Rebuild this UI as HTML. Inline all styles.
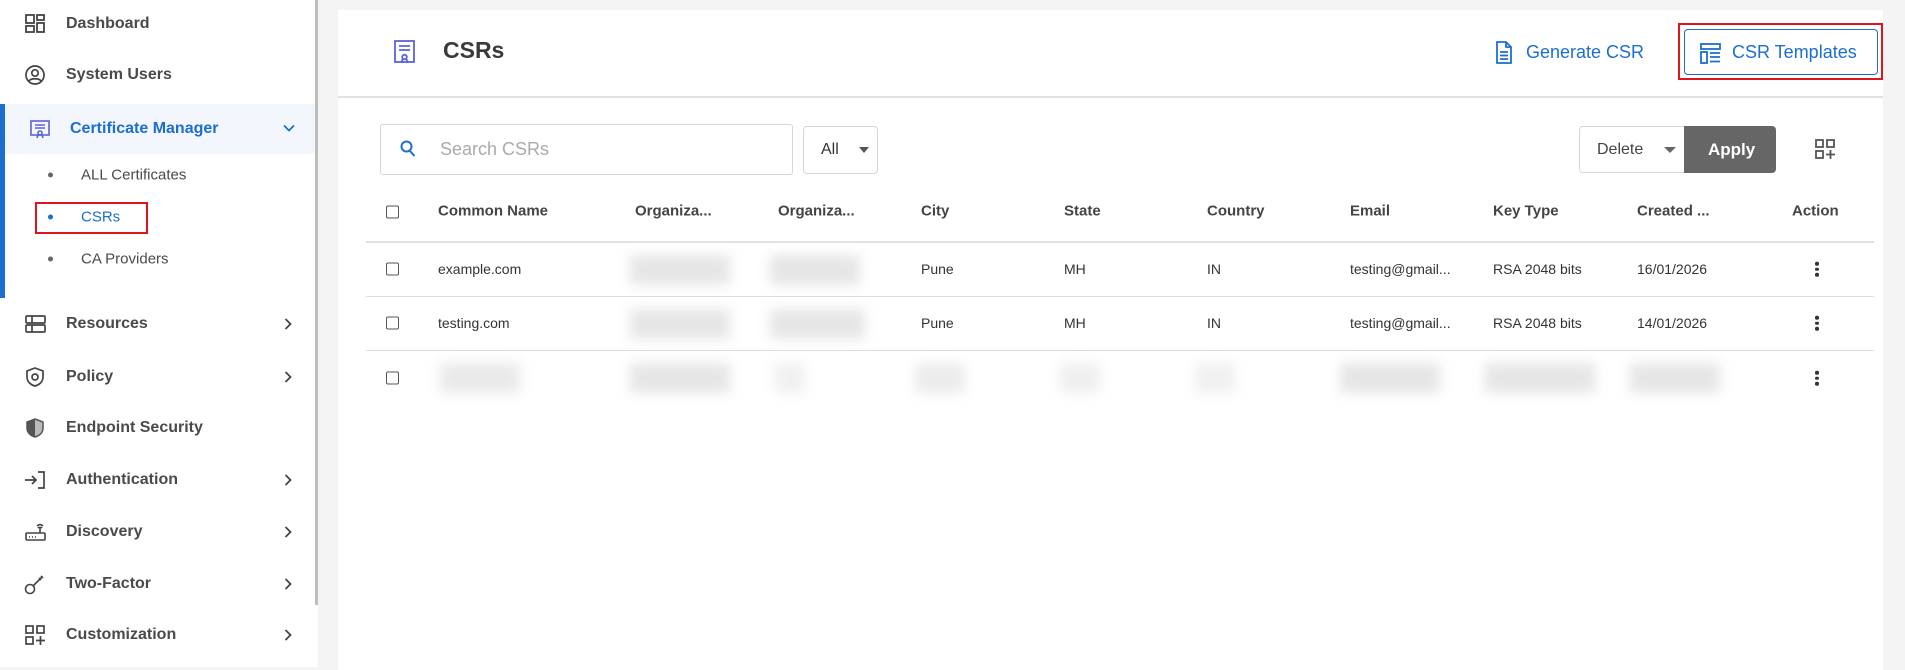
<!DOCTYPE html>
<html><head><meta charset="utf-8">
<style>
*{box-sizing:border-box;margin:0;padding:0}
body{width:1905px;height:667px;overflow:hidden;background:#f4f4f5;font-family:"Liberation Sans",sans-serif;position:relative;color:#444}
.side{position:absolute;left:0;top:0;width:318px;height:667px;background:#fff}
.sb{position:absolute;left:315px;top:0;width:3px;height:605px;background:#bdbdbd}
.it{position:absolute;left:66px;font-size:16px;font-weight:bold;color:#4a4a4a;transform:translateY(-50%)}
.ic{position:absolute;left:24px;width:22px;height:22px;transform:translateY(-50%)}
.ch{position:absolute;left:282px;width:12px;height:12px;transform:translateY(-50%)}
.sub{position:absolute;left:81px;font-size:15px;color:#4a4a4a;transform:translateY(-50%)}
.dot{position:absolute;left:48px;width:5px;height:5px;border-radius:50%;background:#666;transform:translateY(-50%)}
.card{position:absolute;left:338px;top:10px;width:1545px;height:660px;background:#fff}
.abs{position:absolute}
.th{position:absolute;top:211px;font-size:15px;font-weight:bold;color:#444;transform:translateY(-50%)}
.td{position:absolute;font-size:14px;color:#333;transform:translateY(-50%)}
.cb{position:absolute;left:386px;width:13px;height:13px;border:1.5px solid #555;border-radius:2px;transform:translateY(-50%)}
.hl{position:absolute;left:366px;width:1508px;height:1px;background:#ddd}
.bl{position:absolute;height:30px;background:#e6e6e6;filter:blur(6px);transform:translateY(-50%)}
.kd{position:absolute;left:1815px;width:4px;transform:translateY(-50%)}
.kd i{display:block;width:3.5px;height:3.5px;border-radius:50%;background:#333;margin:2px 0}
</style></head><body>
<div class="side">
<div class="sb"></div>
<svg class="ic" style="top:24px" viewBox="0 0 22 22" fill="none" stroke="#444" stroke-width="1.8"><rect x="2" y="2" width="8" height="8"/><rect x="13" y="2" width="7" height="5"/><rect x="2" y="13" width="8" height="6"/><rect x="13" y="10" width="7" height="9"/></svg>
<div class="it" style="top:24px">Dashboard</div>
<svg class="ic" style="top:75px" viewBox="0 0 22 22" fill="none" stroke="#444" stroke-width="1.7"><circle cx="11" cy="11" r="9"/><circle cx="11" cy="9" r="3.2"/><path d="M5 17c2-3 10-3 12 0"/></svg>
<div class="it" style="top:75px">System Users</div>
<div class="abs" style="left:0;top:104px;width:315px;height:50px;background:#f3f6fc"></div>
<div class="abs" style="left:0;top:104px;width:5px;height:194px;background:#1b6fd1"></div>
<svg class="ic" style="top:129px;left:29px" viewBox="0 0 22 22" fill="none" stroke="#5b63d8" stroke-width="1.6"><rect x="2" y="3" width="18" height="14"/><path d="M6 7h10M6 10h10"/><circle cx="11" cy="15" r="2"/><path d="M9 17l-1 3M13 17l1 3"/></svg>
<div class="it" style="top:129px;left:70px;color:#1b6fd1">Certificate Manager</div>
<svg class="ch" style="top:128px;left:283px" viewBox="0 0 12 12" fill="none" stroke="#1b6fd1" stroke-width="1.8"><path d="M1 3.5l5 5 5-5"/></svg>
<div class="dot" style="top:175px"></div><div class="sub" style="top:175px">ALL Certificates</div>
<div class="abs" style="left:35px;top:202px;width:113px;height:32px;border:2px solid #e0141e"></div>
<div class="dot" style="top:217px;background:#1b6fd1"></div><div class="sub" style="top:217px;color:#1b6fd1">CSRs</div>
<div class="dot" style="top:259px"></div><div class="sub" style="top:259px">CA Providers</div>
<svg class="ic" style="top:324px" viewBox="0 0 22 22" fill="none" stroke="#444" stroke-width="1.7"><rect x="2" y="3" width="19" height="7" rx="1"/><rect x="2" y="12" width="19" height="7" rx="1"/><path d="M8 3v7M8 12v7"/></svg>
<div class="it" style="top:324px">Resources</div>
<svg class="ic" style="top:377px" viewBox="0 0 22 22" fill="none" stroke="#444" stroke-width="1.7"><path d="M11 2l8 3v6c0 5-4 8-8 9-4-1-8-4-8-9V5z"/><circle cx="11" cy="11" r="3"/></svg>
<div class="it" style="top:377px">Policy</div>
<svg class="ic" style="top:428px" viewBox="0 0 22 22"><path d="M11 2l8 3v6c0 5-4 8-8 9-4-1-8-4-8-9V5z" fill="#bbb" stroke="#555" stroke-width="1.5"/><path d="M11 2v18c-4-1-8-4-8-9V5z" fill="#555"/></svg>
<div class="it" style="top:428px">Endpoint Security</div>
<svg class="ic" style="top:480px" viewBox="0 0 22 22" fill="none" stroke="#444" stroke-width="1.7"><path d="M1 11h11M8 7l4 4-4 4M14 3h6v16h-6"/></svg>
<div class="it" style="top:480px">Authentication</div>
<svg class="ic" style="top:532px" viewBox="0 0 22 22" fill="none" stroke="#444" stroke-width="1.6"><rect x="2" y="12" width="19" height="7" rx="1"/><path d="M16 12V6M13 5c2-2 4-2 6 0M14 7c1-1 3-1 4 0"/><path d="M5 16h1M8 16h1M11 16h1" stroke-width="1.4"/></svg>
<div class="it" style="top:532px">Discovery</div>
<svg class="ic" style="top:584px" viewBox="0 0 22 22" fill="none" stroke="#444" stroke-width="1.6"><circle cx="6" cy="16" r="4.5"/><path d="M9 13l9-9M15 5l2 2M17 3l2 2"/></svg>
<div class="it" style="top:584px">Two-Factor</div>
<svg class="ic" style="top:635px" viewBox="0 0 22 22" fill="none" stroke="#444" stroke-width="1.7"><rect x="2" y="2" width="7" height="7"/><rect x="13" y="2" width="7" height="7"/><rect x="2" y="13" width="7" height="7"/><path d="M16.5 12v9M12 16.5h9"/></svg>
<div class="it" style="top:635px">Customization</div>
<svg class="ch" style="top:324px" viewBox="0 0 12 12" fill="none" stroke="#444" stroke-width="1.8"><path d="M3.5 1l5 5-5 5"/></svg>
<svg class="ch" style="top:377px" viewBox="0 0 12 12" fill="none" stroke="#444" stroke-width="1.8"><path d="M3.5 1l5 5-5 5"/></svg>
<svg class="ch" style="top:480px" viewBox="0 0 12 12" fill="none" stroke="#444" stroke-width="1.8"><path d="M3.5 1l5 5-5 5"/></svg>
<svg class="ch" style="top:532px" viewBox="0 0 12 12" fill="none" stroke="#444" stroke-width="1.8"><path d="M3.5 1l5 5-5 5"/></svg>
<svg class="ch" style="top:584px" viewBox="0 0 12 12" fill="none" stroke="#444" stroke-width="1.8"><path d="M3.5 1l5 5-5 5"/></svg>
<svg class="ch" style="top:635px" viewBox="0 0 12 12" fill="none" stroke="#444" stroke-width="1.8"><path d="M3.5 1l5 5-5 5"/></svg>
</div>

<div class="card"></div>
<div class="abs" style="left:338px;top:96px;width:1545px;height:2px;background:#e2e2e2"></div>
<svg class="abs" style="left:393px;top:39px" width="24" height="26" viewBox="0 0 24 26" fill="none" stroke="#5b63d8" stroke-width="1.8"><rect x="2" y="2" width="19" height="21"/><path d="M6 7h11M6 11h11"/><circle cx="11.5" cy="18" r="2.3"/><path d="M9.5 20l-1 4M13.5 20l1 4"/></svg>
<div class="abs" style="left:443px;top:37px;font-size:23px;font-weight:bold;color:#3a3a3a">CSRs</div>
<svg class="abs" style="left:1495px;top:40px" width="18" height="25" viewBox="0 0 18 25" fill="none" stroke="#1b6fd1" stroke-width="1.8"><path d="M2 2h9l5 5v16H2z"/><path d="M11 2v5h5M5 12h8M5 15.5h8M5 19h8"/></svg>
<div class="abs" style="left:1526px;top:42px;font-size:18px;color:#1b6fd1">Generate CSR</div>
<div class="abs" style="left:1678px;top:23px;width:205px;height:57px;border:2px solid #e0141e"></div>
<div class="abs" style="left:1684px;top:29px;width:194px;height:46px;border:1.5px solid #1b6fd1;border-radius:4px"></div>
<svg class="abs" style="left:1700px;top:43px" width="21" height="21" viewBox="0 0 21 21" fill="none" stroke="#1b6fd1" stroke-width="1.8"><rect x="1" y="1" width="19" height="5"/><rect x="1" y="9" width="6" height="11"/><path d="M10 10h10M10 14h10M10 18.5h10"/></svg>
<div class="abs" style="left:1732px;top:42px;font-size:18px;color:#1b6fd1">CSR Templates</div>

<div class="abs" style="left:380px;top:124px;width:413px;height:51px;border:1px solid #d6d6d6;border-radius:3px"></div>
<svg class="abs" style="left:400px;top:140px" width="16" height="18" viewBox="0 0 16 18" fill="none" stroke="#1b6fd1" stroke-width="2"><circle cx="6.5" cy="6.5" r="5"/><path d="M10 11l4.5 5"/></svg>
<div class="abs" style="left:440px;top:139px;font-size:18px;color:#aaa">Search CSRs</div>
<div class="abs" style="left:803px;top:126px;width:75px;height:48px;border:1px solid #d6d6d6;border-radius:4px"></div>
<div class="abs" style="left:821px;top:141px;font-size:16px;color:#333">All</div>
<div class="abs" style="left:859px;top:147px;border-left:5px solid transparent;border-right:5px solid transparent;border-top:6px solid #555"></div>
<div class="abs" style="left:1579px;top:126px;width:110px;height:47px;border:1px solid #d6d6d6;border-radius:4px 0 0 4px"></div>
<div class="abs" style="left:1597px;top:141px;font-size:16px;color:#444">Delete</div>
<div class="abs" style="left:1664px;top:147px;border-left:6px solid transparent;border-right:6px solid transparent;border-top:6px solid #666"></div>
<div class="abs" style="left:1684px;top:126px;width:92px;height:47px;background:#666;border-radius:0 4px 4px 0"></div>
<div class="abs" style="left:1708px;top:140px;font-size:17px;font-weight:bold;color:#fff">Apply</div>
<svg class="abs" style="left:1815px;top:139px" width="21" height="21" viewBox="0 0 21 21" fill="none" stroke="#555" stroke-width="1.8"><rect x="1" y="1" width="7" height="7"/><rect x="12" y="1" width="7" height="7"/><rect x="1" y="12" width="7" height="7"/><path d="M15.5 11v9M11 15.5h9"/></svg>

<div class="cb" style="top:212px"></div>
<div class="th" style="left:438px">Common Name</div>
<div class="th" style="left:635px">Organiza...</div>
<div class="th" style="left:778px">Organiza...</div>
<div class="th" style="left:921px">City</div>
<div class="th" style="left:1064px">State</div>
<div class="th" style="left:1207px">Country</div>
<div class="th" style="left:1350px">Email</div>
<div class="th" style="left:1493px">Key Type</div>
<div class="th" style="left:1637px">Created ...</div>
<div class="th" style="left:1792px">Action</div>
<div class="hl" style="top:241px;height:2px;background:#e2e2e2"></div>

<div class="cb" style="top:269px"></div>
<div class="td" style="left:438px;top:269px">example.com</div>
<div class="bl" style="left:630px;top:270px;width:100px"></div>
<div class="bl" style="left:770px;top:270px;width:90px"></div>
<div class="td" style="left:921px;top:269px">Pune</div>
<div class="td" style="left:1064px;top:269px">MH</div>
<div class="td" style="left:1207px;top:269px">IN</div>
<div class="td" style="left:1350px;top:269px">testing@gmail...</div>
<div class="td" style="left:1493px;top:269px">RSA 2048 bits</div>
<div class="td" style="left:1637px;top:269px">16/01/2026</div>
<div class="kd" style="top:269px"><i></i><i></i><i></i></div>
<div class="hl" style="top:296px"></div>

<div class="cb" style="top:323px"></div>
<div class="td" style="left:438px;top:323px">testing.com</div>
<div class="bl" style="left:630px;top:324px;width:100px"></div>
<div class="bl" style="left:770px;top:324px;width:95px"></div>
<div class="td" style="left:921px;top:323px">Pune</div>
<div class="td" style="left:1064px;top:323px">MH</div>
<div class="td" style="left:1207px;top:323px">IN</div>
<div class="td" style="left:1350px;top:323px">testing@gmail...</div>
<div class="td" style="left:1493px;top:323px">RSA 2048 bits</div>
<div class="td" style="left:1637px;top:323px">14/01/2026</div>
<div class="kd" style="top:323px"><i></i><i></i><i></i></div>
<div class="hl" style="top:350px"></div>

<div class="cb" style="top:378px"></div>
<div class="bl" style="left:440px;top:378px;width:80px;background:#eaeaea"></div>
<div class="bl" style="left:630px;top:378px;width:100px"></div>
<div class="bl" style="left:775px;top:378px;width:30px;background:#f0f0f0"></div>
<div class="bl" style="left:915px;top:378px;width:50px;background:#ececec"></div>
<div class="bl" style="left:1060px;top:378px;width:40px;background:#efefef"></div>
<div class="bl" style="left:1195px;top:378px;width:40px;background:#f0f0f0"></div>
<div class="bl" style="left:1340px;top:378px;width:100px"></div>
<div class="bl" style="left:1485px;top:378px;width:110px"></div>
<div class="bl" style="left:1630px;top:378px;width:90px"></div>
<div class="kd" style="top:378px"><i></i><i></i><i></i></div>
</body></html>
